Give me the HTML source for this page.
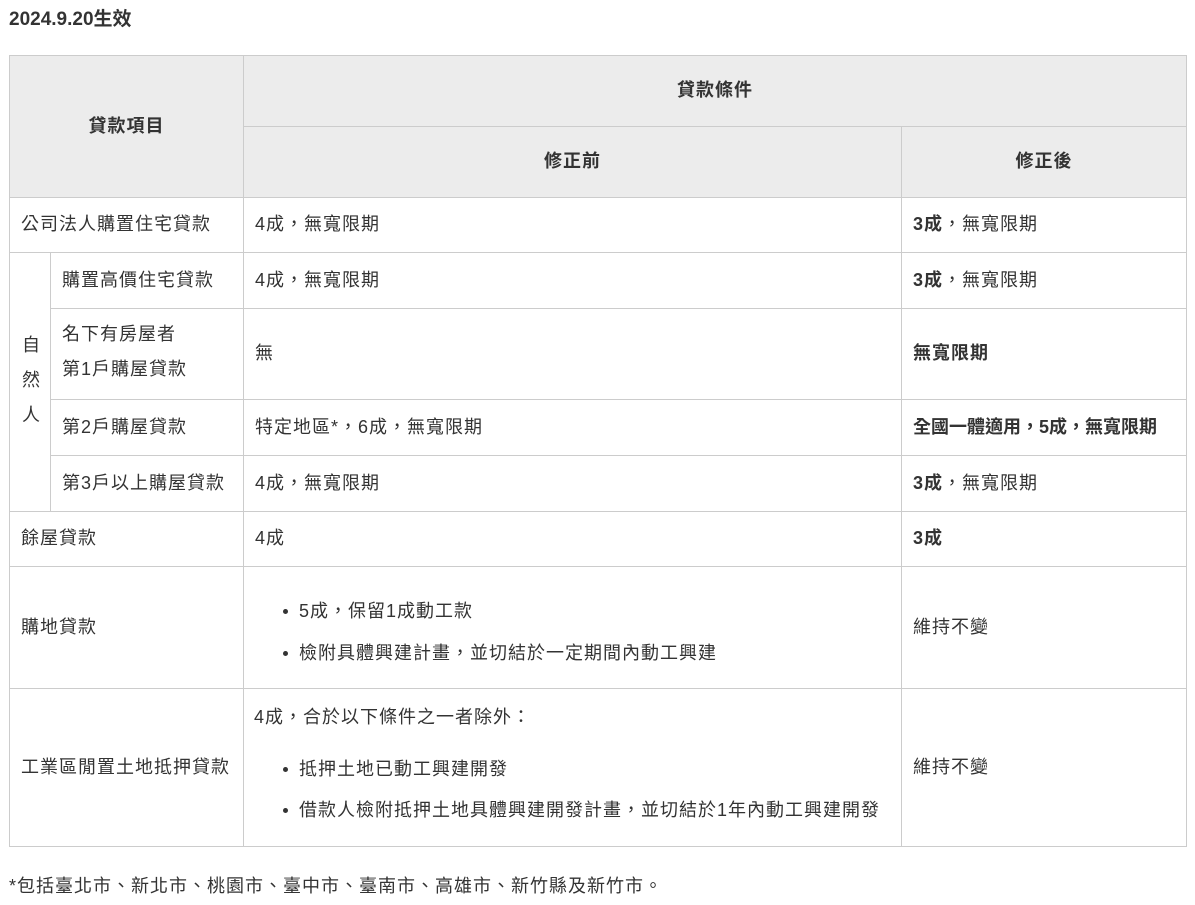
<!DOCTYPE html>
<html><head><meta charset="utf-8"><style>
body{margin:0;background:#fff;width:1195px;height:905px;overflow:hidden;font-family:"Liberation Sans","Noto Sans CJK TC",sans-serif;color:#333;font-size:18px;letter-spacing:1px;position:relative}
.c{position:absolute;box-sizing:border-box;border:1px solid #ccc;display:flex;align-items:center;padding-left:11px;padding-bottom:4px}
.h{background:#ececec;font-weight:bold;justify-content:center;padding-left:0}
b{font-weight:bold}
.t{position:absolute}
.li{position:absolute;left:0}
.li:before{content:"";position:absolute;left:-16px;top:12px;width:5px;height:5px;border-radius:50%;background:#333}
</style></head><body>
<div class="t" style="left:9px;top:4px;font-weight:bold;letter-spacing:0;font-size:19px">2024.9.20生效</div>

<div class="c h" style="left:9px;top:55px;width:235px;height:143px">貸款項目</div>
<div class="c h" style="left:243px;top:55px;width:944px;height:72px">貸款條件</div>
<div class="c h" style="left:243px;top:126px;width:659px;height:72px">修正前</div>
<div class="c h" style="left:901px;top:126px;width:286px;height:72px">修正後</div>

<div class="c" style="left:9px;top:197px;width:235px;height:56px">公司法人購置住宅貸款</div>
<div class="c" style="left:243px;top:197px;width:659px;height:56px">4成，無寬限期</div>
<div class="c" style="left:901px;top:197px;width:286px;height:56px"><b>3成</b>，無寬限期</div>

<div class="c" style="left:9px;top:252px;width:42px;height:260px;padding-left:12px;line-height:35px">自<br>然<br>人</div>

<div class="c" style="left:50px;top:252px;width:194px;height:57px">購置高價住宅貸款</div>
<div class="c" style="left:243px;top:252px;width:659px;height:57px">4成，無寬限期</div>
<div class="c" style="left:901px;top:252px;width:286px;height:57px"><b>3成</b>，無寬限期</div>

<div class="c" style="left:50px;top:308px;width:194px;height:92px;line-height:35px">名下有房屋者<br>第1戶購屋貸款</div>
<div class="c" style="left:243px;top:308px;width:659px;height:92px">無</div>
<div class="c" style="left:901px;top:308px;width:286px;height:92px"><b>無寬限期</b></div>

<div class="c" style="left:50px;top:399px;width:194px;height:57px">第2戶購屋貸款</div>
<div class="c" style="left:243px;top:399px;width:659px;height:57px">特定地區*，6成，無寬限期</div>
<div class="c" style="left:901px;top:399px;width:286px;height:57px;letter-spacing:0"><b>全國一體適用，5成，無寬限期</b></div>

<div class="c" style="left:50px;top:455px;width:194px;height:57px">第3戶以上購屋貸款</div>
<div class="c" style="left:243px;top:455px;width:659px;height:57px">4成，無寬限期</div>
<div class="c" style="left:901px;top:455px;width:286px;height:57px"><b>3成</b>，無寬限期</div>

<div class="c" style="left:9px;top:511px;width:235px;height:56px">餘屋貸款</div>
<div class="c" style="left:243px;top:511px;width:659px;height:56px">4成</div>
<div class="c" style="left:901px;top:511px;width:286px;height:56px"><b>3成</b></div>

<div class="c" style="left:9px;top:566px;width:235px;height:123px">購地貸款</div>
<div class="c" style="left:243px;top:566px;width:659px;height:123px"></div>
<div class="c" style="left:901px;top:566px;width:286px;height:123px">維持不變</div>
<div class="t" style="left:299px;top:597px"><div class="li" style="top:0;white-space:nowrap">5成，保留1成動工款</div><div class="li" style="top:42px;white-space:nowrap">檢附具體興建計畫，並切結於一定期間內動工興建</div></div>

<div class="c" style="left:9px;top:688px;width:235px;height:159px">工業區閒置土地抵押貸款</div>
<div class="c" style="left:243px;top:688px;width:659px;height:159px"></div>
<div class="c" style="left:901px;top:688px;width:286px;height:159px">維持不變</div>
<div class="t" style="left:254px;top:703px;white-space:nowrap">4成，合於以下條件之一者除外：</div>
<div class="t" style="left:299px;top:755px"><div class="li" style="top:0;white-space:nowrap">抵押土地已動工興建開發</div><div class="li" style="top:41px;white-space:nowrap">借款人檢附抵押土地具體興建開發計畫，並切結於1年內動工興建開發</div></div>

<div class="t" style="left:9px;top:872px;white-space:nowrap">*包括臺北市、新北市、桃園市、臺中市、臺南市、高雄市、新竹縣及新竹市。</div>
</body></html>
